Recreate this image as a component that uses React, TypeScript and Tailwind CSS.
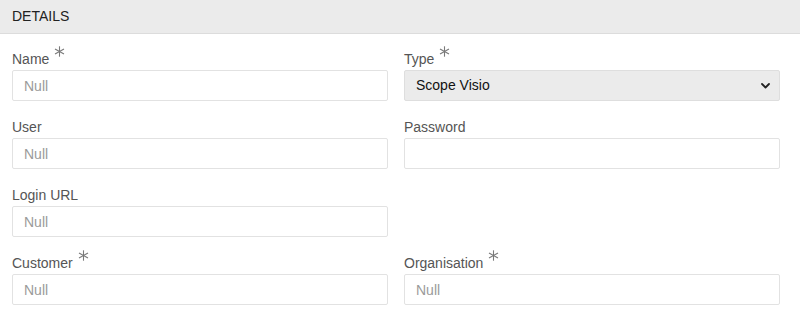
import React from 'react';

const Star = () => (
  <svg
    className="inline-block ml-[5px] relative -top-[7px] align-baseline"
    width="11"
    height="11"
    viewBox="0 0 11 11"
    fill="none"
    stroke="#7a7a7a"
    strokeWidth="1.1"
  >
    <line x1="5.5" y1="0.3" x2="5.5" y2="10.7" />
    <line x1="1" y1="2.9" x2="10" y2="8.1" />
    <line x1="1" y1="8.1" x2="10" y2="2.9" />
  </svg>
);

const Field = ({ label, required, children }: { label: string; required?: boolean; children: React.ReactNode }) => (
  <div className="flex flex-col">
    <div className="h-[20px] leading-[20px] mb-[1px] text-[14px] text-[#555555] whitespace-nowrap">
      {label}
      {required && <Star />}
    </div>
    {children}
  </div>
);

const TextInput = ({ type = 'text', placeholder }: { type?: string; placeholder?: string }) => (
  <input
    type={type}
    placeholder={placeholder}
    className="h-[31px] w-full border border-[#e2e2e2] rounded-[2px] bg-white px-[11px] text-[14px] text-[#333] placeholder:text-[#9a9a9a] outline-none"
  />
);

const App = () => {
  return (
    <div className="w-[800px] h-[321px] bg-white font-['Liberation_Sans',Arial,sans-serif]">
      <div className="h-[34px] bg-[#ebebeb] border-b border-[#dcdcdc] flex items-center px-[12px]">
        <span className="text-[14px] text-[#222222]">DETAILS</span>
      </div>
      <div className="grid grid-cols-[376px_376px] gap-x-[16px] gap-y-[16px] pl-[12px] pt-[15px]">
        <Field label="Name" required>
          <TextInput placeholder="Null" />
        </Field>
        <Field label="Type" required>
          <div className="relative">
            <select
              defaultValue="scope"
              className="appearance-none h-[31px] w-full border border-[#dedede] rounded-[2px] bg-[#ebebeb] px-[11px] text-[14px] text-[#111] outline-none"
            >
              <option value="scope">Scope Visio</option>
            </select>
            <svg
              className="absolute right-[10px] top-[13px] pointer-events-none"
              width="9"
              height="6"
              viewBox="0 0 9 6"
              fill="none"
              stroke="#222"
              strokeWidth="1.8"
              strokeLinecap="round"
              strokeLinejoin="round"
            >
              <polyline points="1,1 4.5,4.5 8,1" />
            </svg>
          </div>
        </Field>
        <Field label="User">
          <TextInput placeholder="Null" />
        </Field>
        <Field label="Password">
          <TextInput type="password" />
        </Field>
        <Field label="Login URL">
          <TextInput placeholder="Null" />
        </Field>
        <div />
        <Field label="Customer" required>
          <TextInput placeholder="Null" />
        </Field>
        <Field label="Organisation" required>
          <TextInput placeholder="Null" />
        </Field>
      </div>
    </div>
  );
};

export default App;
